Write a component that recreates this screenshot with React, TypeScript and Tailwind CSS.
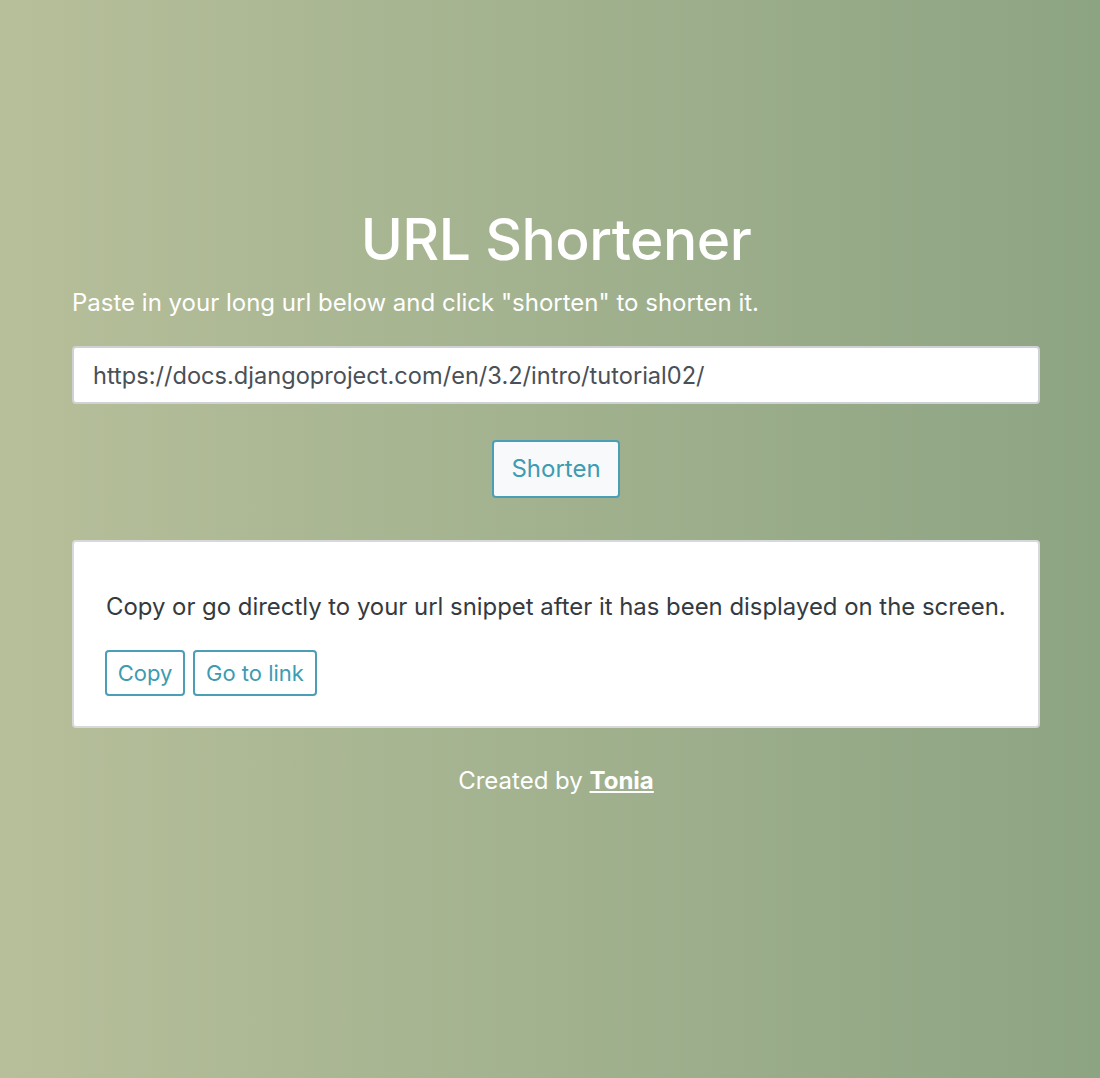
export default function App() {
  return (
    <div
      className="min-h-[1078px] w-full bg-gradient-to-r from-[#b7bf9a] to-[#8da483] text-white"
      style={{ fontFamily: "Inter, 'Noto Sans', sans-serif" }}
    >
      <div className="ml-[72px] w-[968px] pt-[200px]">
        <h1 className="text-center text-[57px] font-medium leading-[80px] tracking-[-0.5px]">URL Shortener</h1>
        <p className="mt-[5px] text-[24px] leading-[36px]">
          Paste in your long url below and click "shorten" to shorten it.
        </p>

        <input
          type="text"
          defaultValue="https://docs.djangoproject.com/en/3.2/intro/tutorial02/"
          className="mt-[25px] h-[58px] w-full rounded-[4px] border-2 border-[#cfd2d4] bg-white px-[19px] text-[23.6px] text-[#495057] outline-none"
        />

        <div className="mt-[36px] flex justify-center">
          <button className="h-[58px] w-[128px] rounded-[4px] border-2 border-[#4a9fb6] bg-[#f8f9fa] text-[24px] text-[#3d9bb2]">
            Shorten
          </button>
        </div>

        <div className="mt-[42px] rounded-[4px] border-2 border-[#d6d8da] bg-white px-[31px] pb-[30px] pt-[47px]">
          <p className="whitespace-nowrap pl-[1px] text-[23.9px] leading-[36px] text-[#343a40]">
            Copy or go directly to your url snippet after it has been displayed on the screen.
          </p>
          <div className="mt-[25px] flex gap-[8px]">
            <button className="h-[46px] w-[80px] rounded-[4px] border-2 border-[#4a9fb6] text-[22px] text-[#3d9bb2]">
              Copy
            </button>
            <button className="h-[46px] w-[124px] rounded-[4px] border-2 border-[#4a9fb6] text-[22px] text-[#3d9bb2]">
              Go to link
            </button>
          </div>
        </div>

        <p className="mt-[35px] text-center text-[24px] leading-[36px]">
          Created by{" "}
          <a href="#" className="font-bold underline">
            Tonia
          </a>
        </p>
      </div>
    </div>
  )
}
